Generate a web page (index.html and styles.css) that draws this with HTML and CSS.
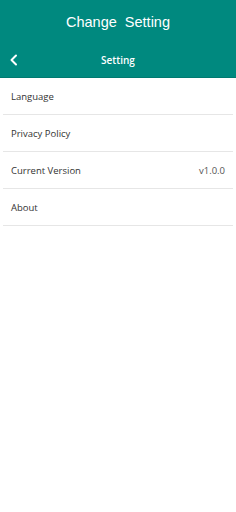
FILE: index.html
```html
<!DOCTYPE html>
<html lang="en">
<head>
  <meta charset="UTF-8">
  <title>Change Setting</title>
  <link rel="stylesheet" href="styles.css">
</head>
<body>

<div class="header">
  <h1>Change&nbsp; Setting</h1>
  <div class="nav">
    <svg class="back" width="10" height="12" viewBox="0 0 10 12">
      <path d="M7 1.5 L2.5 6 L7 10.5" fill="none" stroke="#fff" stroke-width="2" stroke-linecap="round" stroke-linejoin="round"/>
    </svg>
    <span class="nav-title">Setting</span>
  </div>
</div>

<ul class="list">
  <li><span>Language</span></li>
  <li><span>Privacy Policy</span></li>
  <li><span>Current Version</span><span class="value">v1.0.0</span></li>
  <li><span>About</span></li>
</ul>

</body>
</html>
```

FILE: styles.css
```css
body {
  margin: 0;
  background: #fff;
  font-family: "Open Sans", Arial, sans-serif;
}

.header {
  background: #00897f;
  color: white;
  border-bottom: 1px solid #007a71;
}

.header h1 {
  margin: 0;
  height: 43px;
  padding-top: 1px;
  box-sizing: border-box;
  display: flex;
  align-items: center;
  justify-content: center;
  font-family: "Liberation Sans", Arial, sans-serif;
  font-weight: normal;
  font-size: 14.5px;
}

.nav {
  position: relative;
  height: 34px;
  display: flex;
  align-items: center;
  justify-content: center;
}

.back {
  position: absolute;
  left: 9px;
  top: 11px;
}

.nav-title {
  font-size: 10px;
  font-weight: 600;
}

.list {
  list-style: none;
  margin: 0;
  padding: 0 3px;
}

.list li {
  height: 36px;
  display: flex;
  align-items: center;
  justify-content: space-between;
  padding: 0 8px;
  border-bottom: 1px solid #e6e6e6;
  font-size: 9.5px;
  color: #333;
}

.value {
  color: #555;
}
```
